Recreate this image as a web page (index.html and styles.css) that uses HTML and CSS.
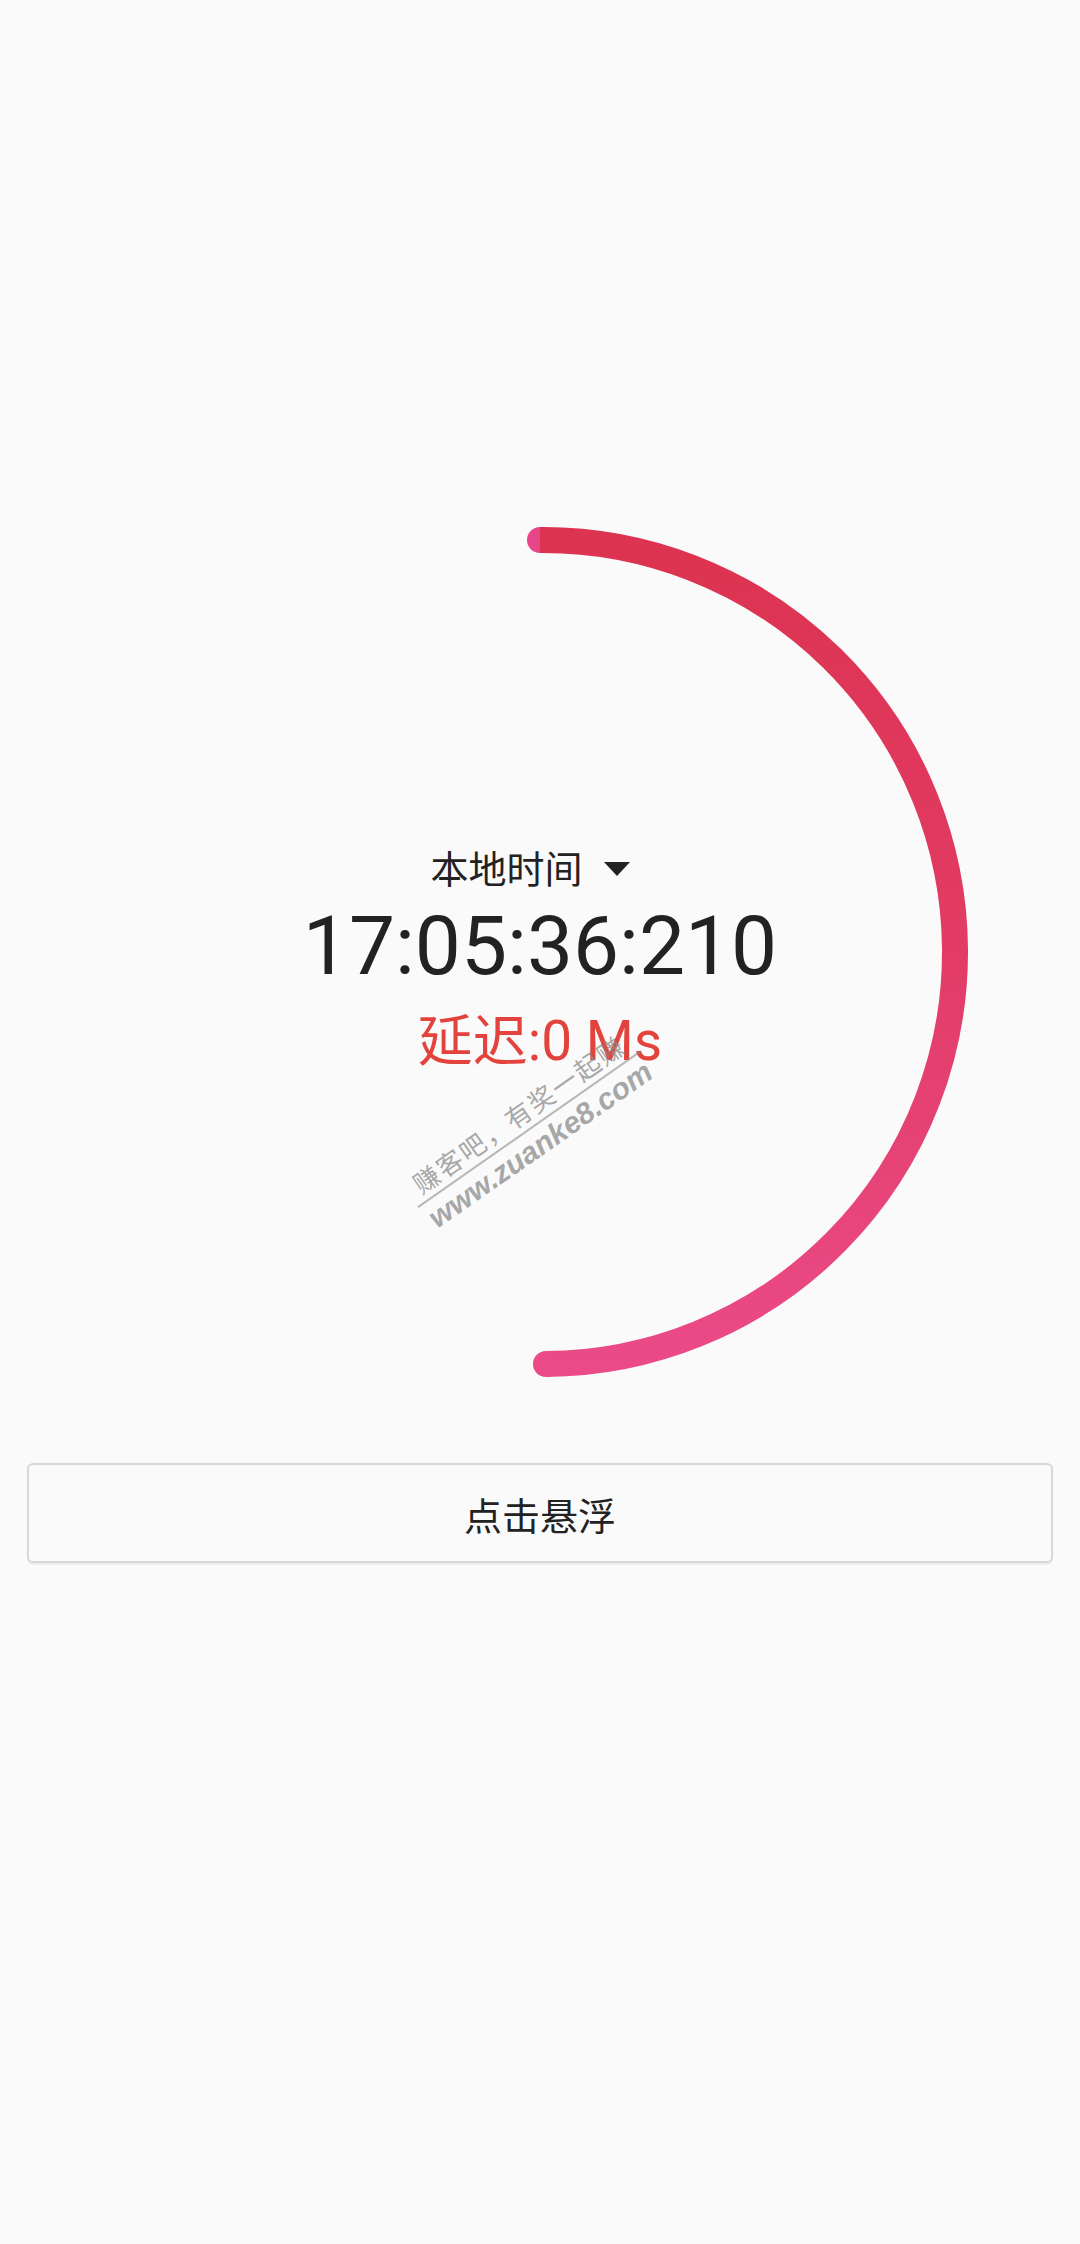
FILE: index.html
```html
<!DOCTYPE html>
<html lang="zh-CN">
<head>
<meta charset="utf-8">
<title>本地时间</title>
<link rel="stylesheet" href="styles.css">
</head>
<body>
<div class="page">
  <div class="dial">
    <svg class="ring" width="1080" height="880" viewBox="0 0 1080 880" xmlns="http://www.w3.org/2000/svg">
      <defs>
        <linearGradient id="arcGrad" x1="0" y1="28" x2="0" y2="853" gradientUnits="userSpaceOnUse">
          <stop offset="0" stop-color="#dc3350"/>
          <stop offset="0.5" stop-color="#e23c66"/>
          <stop offset="1" stop-color="#ea4a87"/>
        </linearGradient>
      </defs>
      <circle cx="540" cy="28" r="13" fill="#e8468a"/>
      <path d="M540 28 A412 412 0 0 1 546 852" fill="none" stroke="url(#arcGrad)" stroke-width="26" stroke-linecap="butt"/>
      <circle cx="546" cy="852" r="13" fill="#ea4a87"/>
    </svg>
    <div class="readout">
      <div class="mode">本地时间<span class="caret"></span></div>
      <div class="clock">17:05:36:210</div>
      <div class="delay">延迟:0 Ms</div>
    </div>
  </div>
  <button class="float-btn">点击悬浮</button>
  <div class="watermark">
    <div class="wm-top">赚客吧，有奖一起赚</div>
    <div class="wm-bottom">www.zuanke8.com</div>
  </div>
</div>
</body>
</html>
```

FILE: styles.css
```css
html, body {
  margin: 0;
  padding: 0;
  background: #fafafa;
}
body {
  width: 1080px;
  height: 2244px;
  overflow: hidden;
  font-family: Roboto, "Noto Sans CJK SC", sans-serif;
  color: #212121;
}
.page {
  position: relative;
  padding-top: 512px;
}
.dial {
  display: grid;
  width: 1080px;
  height: 880px;
}
.ring {
  grid-area: 1 / 1;
  display: block;
}
.readout {
  grid-area: 1 / 1;
  display: flex;
  flex-direction: column;
  align-items: center;
  padding-top: 331px;
}
.mode {
  display: flex;
  align-items: center;
  height: 48px;
  font-size: 38px;
  line-height: 48px;
  color: #222;
  padding-right: 20px;
  font-family: "Noto Sans CJK SC", sans-serif;
}
.caret {
  display: inline-block;
  width: 0;
  height: 0;
  margin-left: 21px;
  margin-top: 4px;
  border-left: 13px solid transparent;
  border-right: 13px solid transparent;
  border-top: 14px solid #222;
}
.clock {
  margin-top: 10px;
  height: 90px;
  font-size: 82px;
  line-height: 90px;
  color: #222;
  font-family: Roboto, sans-serif;
}
.delay {
  margin-top: 18px;
  height: 64px;
  font-size: 55px;
  line-height: 64px;
  color: #e2443d;
  font-family: Roboto, "Noto Sans CJK SC", sans-serif;
}
.float-btn {
  display: block;
  box-sizing: border-box;
  margin: 71px 27px 0;
  width: 1026px;
  height: 100px;
  background: #fafafa;
  border: 2px solid #d8d8d8;
  border-radius: 6px;
  box-shadow: 0 2px 2px rgba(0, 0, 0, 0.06);
  font-family: "Noto Sans CJK SC", sans-serif;
  font-size: 38px;
  color: #222;
  padding: 0;
}
.watermark {
  position: absolute;
  left: 530px;
  top: 1130px;
  transform: translate(-50%, -50%) rotate(-35deg);
  display: flex;
  flex-direction: column;
  align-items: center;
  color: rgba(140, 140, 140, 0.75);
  pointer-events: none;
}
.wm-top {
  font-family: "Noto Sans CJK SC", sans-serif;
  font-size: 26px;
  line-height: 32px;
  letter-spacing: 2px;
  padding: 0 10px 2px;
  border-bottom: 2px solid rgba(140, 140, 140, 0.6);
}
.wm-bottom {
  font-family: "Liberation Sans", Arial, sans-serif;
  font-weight: bold;
  font-style: italic;
  font-size: 30px;
  line-height: 36px;
}
```
